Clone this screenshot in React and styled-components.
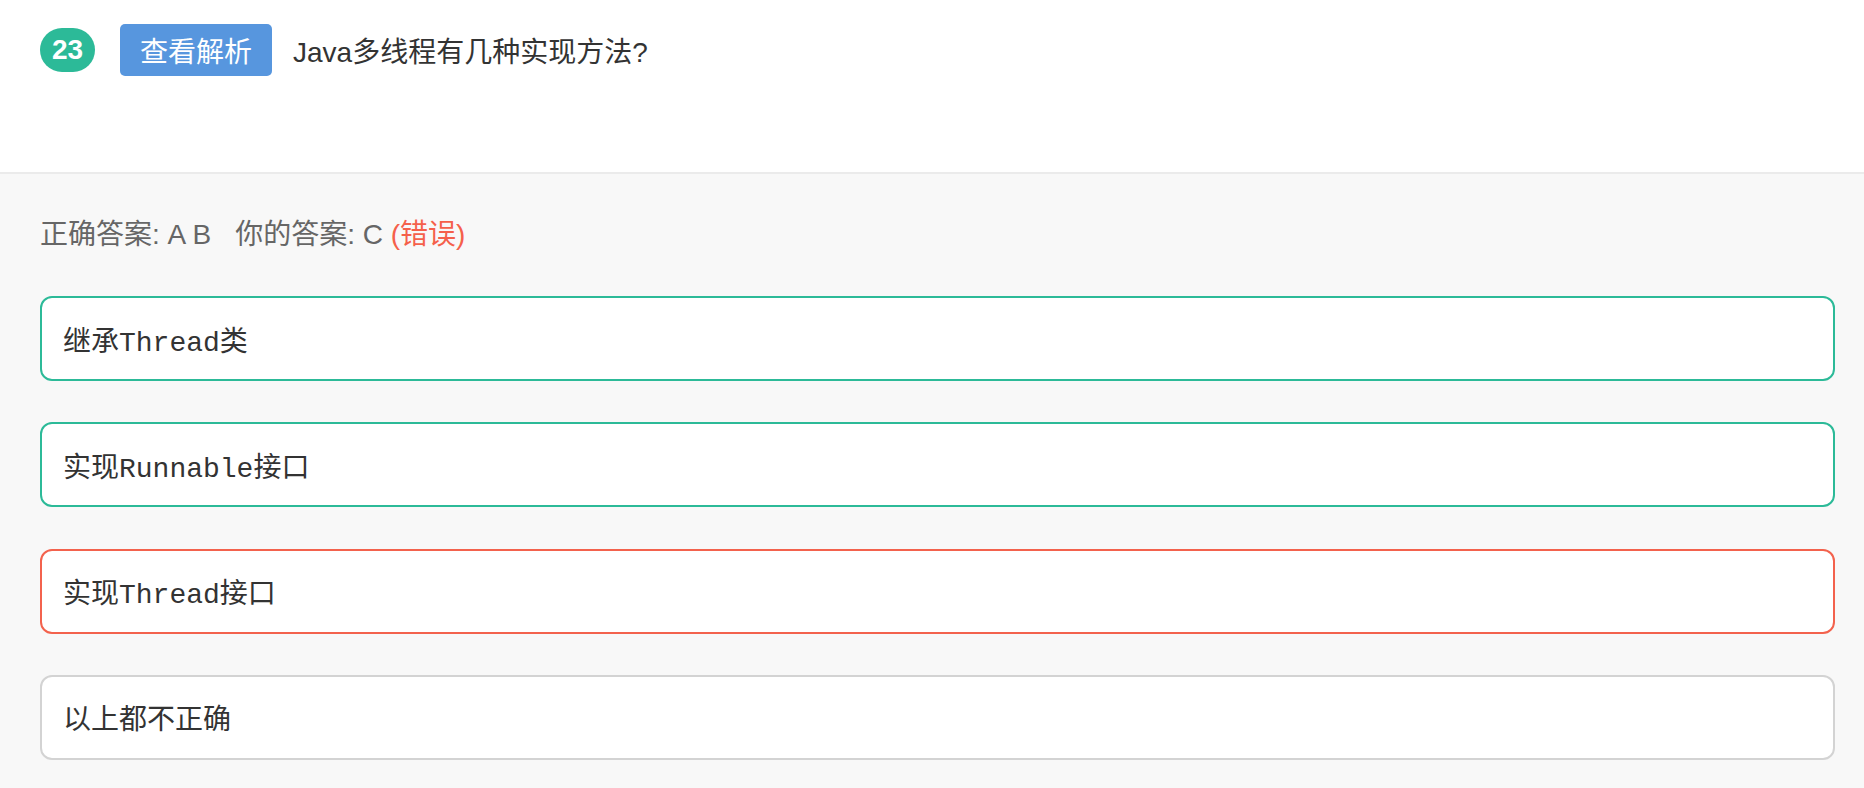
import React from "react"
import styled, { createGlobalStyle } from "styled-components"

const GlobalStyle = createGlobalStyle`
  html, body {
    margin: 0;
    padding: 0;
    background: #f8f8f8;
  }
  body {
    font-family: "Liberation Sans", "Noto Sans CJK SC", sans-serif;
  }
`

const Header = styled.div`
  background: #fff;
  height: 174px;
  box-sizing: border-box;
  padding: 24px 40px 0;
  border-bottom: 2px solid #ebebeb;
  display: flex;
  align-items: flex-start;
`

const HeaderRow = styled.div`
  display: flex;
  align-items: center;
  height: 52px;
`

const Number = styled.span`
  display: inline-flex;
  align-items: center;
  justify-content: center;
  width: 55px;
  height: 44px;
  border-radius: 22px;
  background: #2cba98;
  color: #fff;
  font-size: 28px;
  font-weight: bold;
  margin-right: 25px;
`

const ParseButton = styled.button`
  width: 152px;
  height: 52px;
  border: none;
  border-radius: 5px;
  background: #5796de;
  color: #fff;
  font-family: "Liberation Sans", "Noto Sans CJK SC", sans-serif;
  font-size: 28px;
  padding: 0;
  margin-right: 21px;
  cursor: pointer;
`

const Question = styled.span`
  font-size: 28px;
  color: #333;
`

const Body = styled.div`
  background: #f8f8f8;
  padding: 41px 29px 30px 40px;
`

const AnswerLine = styled.div`
  font-size: 28px;
  line-height: 40px;
  color: #666;
  margin-bottom: 41px;
`

const Yours = styled.span`
  margin-left: 24px;
`

const Wrong = styled.span`
  color: #f5604b;
`

const Options = styled.div`
  display: flex;
  flex-direction: column;
  gap: 41.3px;
`

const borderColors = {
  right: "#2cba98",
  wrong: "#f3624d",
  plain: "#d3d3d3",
}

const Option = styled.div`
  box-sizing: border-box;
  height: 85px;
  background: #fff;
  border: 2px solid ${p => borderColors[p.$state]};
  border-radius: 12px;
  display: flex;
  align-items: center;
  padding: 0 21px;
  font-family: "Liberation Mono", "Noto Sans CJK SC", monospace;
  font-size: 28px;
  color: #333;
`

const options = [
  { text: "继承Thread类", state: "right" },
  { text: "实现Runnable接口", state: "right" },
  { text: "实现Thread接口", state: "wrong" },
  { text: "以上都不正确", state: "plain" },
]

const App = () => {
  return (
    <>
      <GlobalStyle />
      <Header>
        <HeaderRow>
          <Number>23</Number>
          <ParseButton>查看解析</ParseButton>
          <Question>Java多线程有几种实现方法?</Question>
        </HeaderRow>
      </Header>
      <Body>
        <AnswerLine>
          正确答案: A B<Yours>你的答案: C </Yours>
          <Wrong>(错误)</Wrong>
        </AnswerLine>
        <Options>
          {options.map((option, index) => (
            <Option key={index} $state={option.state}>
              {option.text}
            </Option>
          ))}
        </Options>
      </Body>
    </>
  )
}

export default App
